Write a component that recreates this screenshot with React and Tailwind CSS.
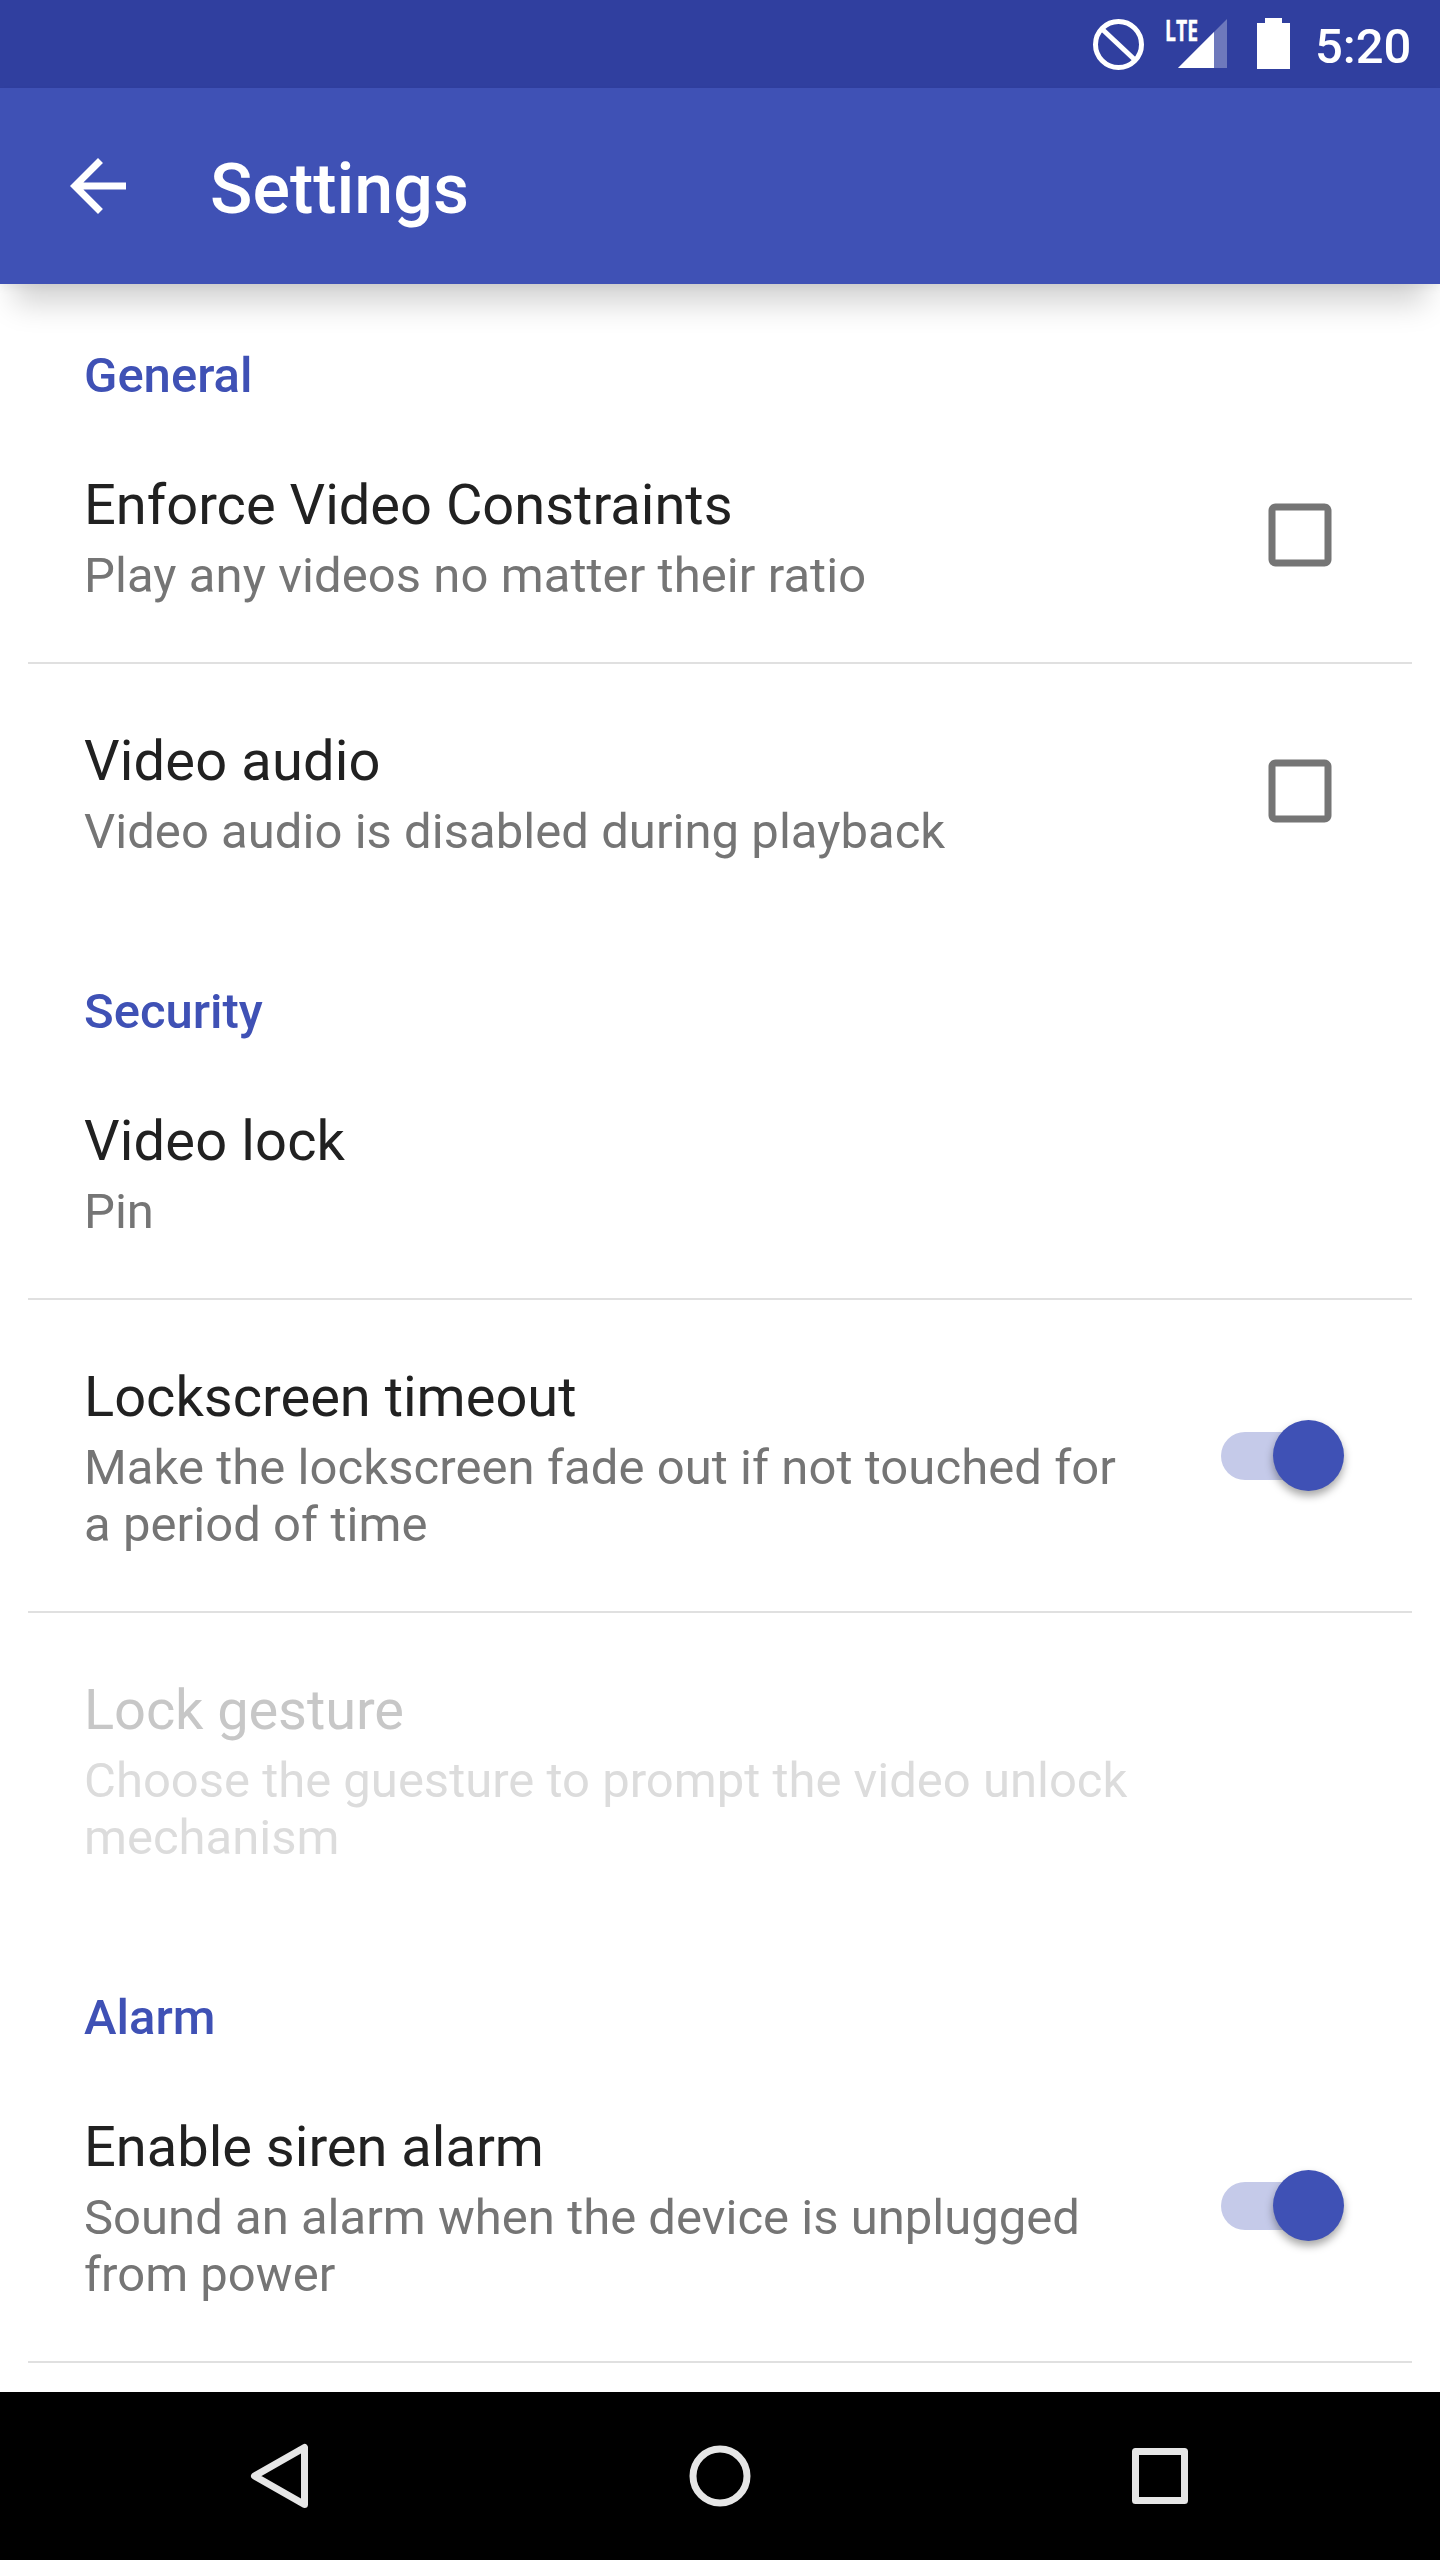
import React from "react";

function StatusBar() {
  return (
    <div className="flex h-[88px] items-center justify-end bg-[#303F9F] pr-[28px]">
      <svg className="h-[88px] w-[220px] shrink-0" viewBox="1090 0 220 88">
        <g fill="none" stroke="#fff" strokeWidth="5">
          <circle cx="1118.5" cy="44.5" r="23" />
          <path d="M1102 29 L1135 60" />
        </g>
        <path d="M1227 19V68H1178Z" fill="#fff" fillOpacity="0.3" />
        <path d="M1214 32V68H1178Z" fill="#fff" />
        <text x="1165" y="41" fill="#fff" stroke="#fff" strokeWidth="0.4" fontFamily="Open Sans" fontWeight="700" fontSize="29" textLength="33" lengthAdjust="spacingAndGlyphs">LTE</text>
        <path d="M1265 18h17v5h8v46h-33V23h8Z" fill="#fff" />
      </svg>
      <span className="mt-[6px] w-[102px] whitespace-nowrap pl-[5px] text-[49px] font-medium leading-[58px] text-white">5:20</span>
    </div>
  );
}

function AppBar() {
  return (
    <header className="relative flex h-[196px] items-center bg-[#3F51B5] pl-[56px] shadow-[0_34px_28px_-14px_rgba(0,0,0,0.17),0_4px_8px_rgba(0,0,0,0.05)]">
      <svg className="h-[84px] w-[84px]" viewBox="0 0 24 24" fill="#fff">
        <path d="M20 11H7.83l5.59-5.59L12 4l-8 8 8 8 1.41-1.41L7.83 13H20v-2z" />
      </svg>
      <h1 className="ml-[70px] mt-[6px] text-[70px] font-medium leading-[82px] text-white">Settings</h1>
    </header>
  );
}

function Section({ title, children }) {
  return (
    <section>
      <h2 className="h-[124px] px-[84px] pt-[63px] text-[49px] font-medium leading-[58px] text-[#3F51B5]">{title}</h2>
      {children}
    </section>
  );
}

function Checkbox() {
  return (
    <svg className="mb-[6px] mr-[2px] h-[84px] w-[84px]" viewBox="0 0 24 24" fill="#757575">
      <path d="M19 5v14H5V5h14m0-2H5c-1.1 0-2 .9-2 2v14c0 1.1.9 2 2 2h14c1.1 0 2-.9 2-2V5c0-1.1-.9-2-2-2z" />
    </svg>
  );
}

function Switch() {
  return (
    <div className="mb-[6px] flex h-[71px] w-[123px] items-center justify-end">
      <div className="h-[48px] w-[88px] rounded-l-full bg-[#C5CAE9]" />
      <div className="-ml-[36px] h-[71px] w-[71px] rounded-full bg-[#3F51B5] shadow-[0_5px_8px_rgba(0,0,0,0.35)]" />
    </div>
  );
}

function Row({ title, lines, control, disabled, divider, titleTracking = "", lineTracking = "" }) {
  return (
    <>
      <div className="flex items-center justify-between pb-[58px] pl-[84px] pr-[96px] pt-[64px]">
        <div className="whitespace-nowrap">
          <div className={`text-[56px] leading-[66px] ${disabled ? "text-[#C7C7C7]" : "text-[#212121]"} ${titleTracking}`}>{title}</div>
          <div className={`mt-[9px] text-[49px] leading-[57px] ${disabled ? "text-[#DCDCDC]" : "text-[#757575]"} ${lineTracking}`}>
            {lines.map((line) => (
              <div key={line}>{line}</div>
            ))}
          </div>
        </div>
        {control}
      </div>
      <div className={`mx-[28px] h-[2px] ${divider ? "bg-[#E0E0E0]" : ""}`} />
    </>
  );
}

function NavBar() {
  return (
    <nav className="flex h-[168px] items-center justify-between bg-black px-[238px]">
      <svg className="h-[84px] w-[84px]" viewBox="0 0 84 84" fill="none" stroke="#E6E6E6" strokeWidth="7" strokeLinejoin="round">
        <path d="M66.500 13.500V70.500L16.500 42Z" />
      </svg>
      <svg className="h-[84px] w-[84px]" viewBox="0 0 84 84" fill="none" stroke="#E6E6E6" strokeWidth="7">
        <circle cx="42" cy="42" r="27" />
      </svg>
      <svg className="h-[84px] w-[84px]" viewBox="0 0 84 84" fill="none" stroke="#E6E6E6" strokeWidth="7" strokeLinejoin="round">
        <rect x="17.500" y="17.500" width="49" height="49" />
      </svg>
    </nav>
  );
}

export default function App() {
  return (
    <div className="flex h-[2560px] w-[1440px] flex-col overflow-hidden bg-white font-['Roboto',sans-serif]">
      <StatusBar />
      <AppBar />
      <main className="min-h-0 flex-1 overflow-hidden">
        <Section title="General">
          <Row title="Enforce Video Constraints" lines={["Play any videos no matter their ratio"]} lineTracking="tracking-[0.07px]" control={<Checkbox />} divider />
          <Row title="Video audio" titleTracking="tracking-[0.15px]" lines={["Video audio is disabled during playback"]} lineTracking="tracking-[0.04px]" control={<Checkbox />} />
        </Section>
        <Section title="Security">
          <Row title="Video lock" titleTracking="tracking-[0.15px]" lines={["Pin"]} divider />
          <Row title="Lockscreen timeout" lines={["Make the lockscreen fade out if not touched for", "a period of time"]} lineTracking="tracking-[0.06px]" control={<Switch />} divider />
          <Row title="Lock gesture" titleTracking="tracking-[-0.1px]" lines={["Choose the guesture to prompt the video unlock", "mechanism"]} disabled />
        </Section>
        <Section title="Alarm">
          <Row title="Enable siren alarm" lines={["Sound an alarm when the device is unplugged", "from power"]} lineTracking="tracking-[0.02px]" control={<Switch />} divider />
        </Section>
      </main>
      <NavBar />
    </div>
  );
}
